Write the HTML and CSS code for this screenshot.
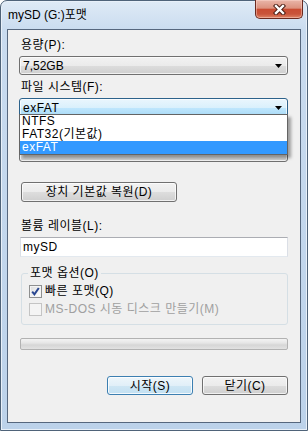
FILE: index.html
```html
<!DOCTYPE html>
<html lang="ko">
<head>
    <meta charset="UTF-8">
    <meta name="viewport" content="width=device-width, initial-scale=1.0">
    <title>mySD (G:)포맷</title>
    <link rel="stylesheet" href="styles.css">
</head>
<body>
    <div class="window">
        <div class="titlebar">
            <span class="title">mySD (G:)포맷</span>
            <div class="close-btn">
                <svg width="13" height="11" viewBox="0 0 13 11">
                    <path d="M3 2 L10 9 M10 2 L3 9" stroke="#4a1d14" stroke-width="4.4" stroke-linecap="square" fill="none"/>
                    <path d="M3 2 L10 9 M10 2 L3 9" stroke="#ffffff" stroke-width="2.4" stroke-linecap="square" fill="none"/>
                </svg>
            </div>
        </div>

        <div class="client">
            <div class="label">용량(P):</div>
            <div class="combo">
                <span class="value">7,52GB</span>
                <svg class="arrow" width="7" height="4" viewBox="0 0 7 4"><path d="M0 0 H7 L3.5 4 Z" fill="#000"/></svg>
            </div>

            <div class="label label-gap">파일 시스템(F):</div>
            <div class="combo-open">
                <div class="combo focused">
                    <span>exFAT</span>
                    <svg class="arrow" width="7" height="4" viewBox="0 0 7 4"><path d="M0 0 H7 L3.5 4 Z" fill="#000"/></svg>
                </div>
                <ul class="dropdown">
                    <li>NTFS</li>
                    <li>FAT32(기본값)</li>
                    <li class="selected">exFAT</li>
                </ul>
            </div>

            <!-- allocation size combo, hidden behind the open list -->
            <div class="combo alloc"></div>

            <button class="btn restore">장치 기본값 복원(D)</button>

            <div class="label label-volume">볼륨 레이블(L):</div>
            <div class="textbox">mySD</div>

            <fieldset class="group">
                <legend>포맷 옵션(O)</legend>
                <div class="check-row">
                    <span class="checkbox checked">
                        <svg width="9" height="9" viewBox="0 0 9 9"><path d="M1.2 4.6 L3.4 7.3 L7.8 1" stroke="#2a4791" stroke-width="2" fill="none"/></svg>
                    </span>
                    <span>빠른 포맷(Q)</span>
                </div>
                <div class="check-row disabled">
                    <span class="checkbox"></span>
                    <span>MS-DOS 시동 디스크 만들기(M)</span>
                </div>
            </fieldset>

            <div class="progress"></div>

            <div class="actions">
                <button class="btn default">시작(S)</button>
                <button class="btn">닫기(C)</button>
            </div>
        </div>
    </div>
</body>
</html>
```

FILE: styles.css
```css
body {
    margin: 0;
    width: 308px;
    height: 431px;
    background-color: #ffffff;
    font-family: "Liberation Sans", "Noto Sans CJK KR", sans-serif;
    font-size: 12px;
    color: #000;
}
.window {
    box-sizing: border-box;
    width: 308px;
    height: 431px;
    border: 1px solid #4f6379;
    border-radius: 7px 7px 0 0;
    background: linear-gradient(to bottom, #dfeaf6 0, #c9dbef 30px, #bcd2ea 100%);
    box-shadow: inset 0 0 0 1px #e8f0f9;
}
.titlebar {
    height: 28px;
    display: flex;
    justify-content: space-between;
    align-items: flex-start;
}
.title {
    padding-left: 7px;
    line-height: 14px;
    margin-top: 7px;
}
.close-btn {
    box-sizing: border-box;
    width: 48px;
    height: 19px;
    margin-top: -1px;
    margin-right: 4px;
    border: 1px solid #6b2a1f;
    border-top: none;
    border-radius: 0 0 5px 5px;
    background: linear-gradient(to bottom, #e9b6a9 0%, #dc917e 45%, #c94c32 52%, #c9543a 78%, #de8466 100%);
    box-shadow: inset 0 0 0 1px rgba(255, 220, 210, 0.45);
    display: flex;
    justify-content: center;
    align-items: center;
}
.client {
    box-sizing: border-box;
    height: 394px;
    margin: 0 6px;
    border: 1px solid #56677e;
    background-color: #f0f0f0;
    padding: 8px 12px 0 11px;
    display: flex;
    flex-direction: column;
    align-items: flex-start;
    letter-spacing: 0.5px;
}
.label {
    line-height: 14px;
    padding-left: 2px;
}
.label-gap {
    margin-top: 5px;
}
.combo {
    box-sizing: border-box;
    width: 269px;
    height: 19px;
    margin-top: 4px;
    border: 1px solid #707070;
    border-radius: 3px;
    background: linear-gradient(to bottom, #f2f2f2 0%, #ebebeb 50%, #dddddd 51%, #cfcfcf 100%);
    box-shadow: inset 0 0 0 1px rgba(255, 255, 255, 0.7);
    display: flex;
    align-items: center;
    justify-content: space-between;
    padding: 0 5px 0 3px;
    line-height: 14px;
}
.combo .value {
    letter-spacing: 0;
}
.combo.focused {
    height: 20px;
    border-color: #2c628b;
    background: linear-gradient(to bottom, #eaf6fd 0%, #d9f0fc 50%, #bee6fd 51%, #a7d9f5 100%);
}
.combo-open {
    position: relative;
    z-index: 2;
}
.dropdown {
    position: absolute;
    top: 20px;
    left: 0;
    box-sizing: border-box;
    width: 269px;
    margin: 0;
    padding: 0;
    list-style: none;
    background-color: #fff;
    border: 1px solid #646464;
    box-shadow: 3px 3px 3px rgba(0, 0, 0, 0.35);
}
.dropdown li {
    height: 13px;
    line-height: 13px;
    padding-left: 2px;
}
.dropdown li.selected {
    background-color: #3399ff;
    color: #fff;
}
.combo.alloc {
    height: 20px;
    margin-top: 24px;
}
.btn {
    box-sizing: border-box;
    height: 20px;
    margin: 0;
    padding: 0;
    border: 1px solid #707070;
    border-radius: 3px;
    background: linear-gradient(to bottom, #f2f2f2 0%, #ebebeb 50%, #dddddd 51%, #cfcfcf 100%);
    box-shadow: inset 0 0 0 1px rgba(255, 255, 255, 0.7);
    font-family: inherit;
    font-size: 12px;
    letter-spacing: 0.5px;
    line-height: 14px;
    color: #000;
}
.restore {
    width: 156px;
    margin-top: 20px;
    margin-left: 2px;
}
.label-volume {
    margin-top: 17px;
}
.textbox {
    box-sizing: border-box;
    width: 268px;
    height: 20px;
    margin-top: 4px;
    margin-left: 1px;
    border: 1px solid #dbdfe6;
    border-top-color: #abadb3;
    border-bottom-color: #e3e9ef;
    background-color: #fff;
    padding-left: 2px;
    line-height: 18px;
}
.group {
    box-sizing: border-box;
    width: 267px;
    margin: 9px 0 0 2px;
    padding: 4px 6px 8px 6px;
    border: 1px solid #d5dfe5;
    border-radius: 3px;
    display: flex;
    flex-direction: column;
    gap: 4px;
}
.group legend {
    padding: 0 2px;
    line-height: 14px;
}
.check-row {
    display: flex;
    align-items: center;
    height: 14px;
    line-height: 14px;
    margin-left: 1px;
}
.check-row.disabled {
    color: #a0a0a0;
}
.checkbox {
    box-sizing: border-box;
    width: 13px;
    height: 13px;
    margin-right: 3px;
    border: 1px solid #8e8f8f;
    background: linear-gradient(135deg, #dcdcdc 0%, #f6f6f6 70%, #ffffff 100%);
    box-shadow: inset 0 0 0 1px #f4f4f4;
    display: flex;
    align-items: center;
    justify-content: center;
}
.check-row.disabled .checkbox {
    border-color: #c4c4c4;
    background: #f4f4f4;
}
.progress {
    box-sizing: border-box;
    width: 268px;
    height: 12px;
    margin-top: 13px;
    margin-left: 1px;
    border: 1px solid #b2b2b2;
    border-radius: 2px;
    background: linear-gradient(to bottom, #f3f3f3 0%, #e6e6e6 40%, #d6d6d6 60%, #e2e2e2 100%);
}
.actions {
    align-self: stretch;
    margin-top: 26px;
    display: flex;
    justify-content: flex-end;
    gap: 9px;
}
.actions .btn {
    width: 86px;
    height: 19px;
}
.btn.default {
    border-color: #3c7fb1;
    background: linear-gradient(to bottom, #eef6fb 0%, #e1eff8 50%, #cfe6f4 51%, #c2e0f2 100%);
    box-shadow: inset 0 0 0 1px rgba(255, 255, 255, 0.8);
}
```
